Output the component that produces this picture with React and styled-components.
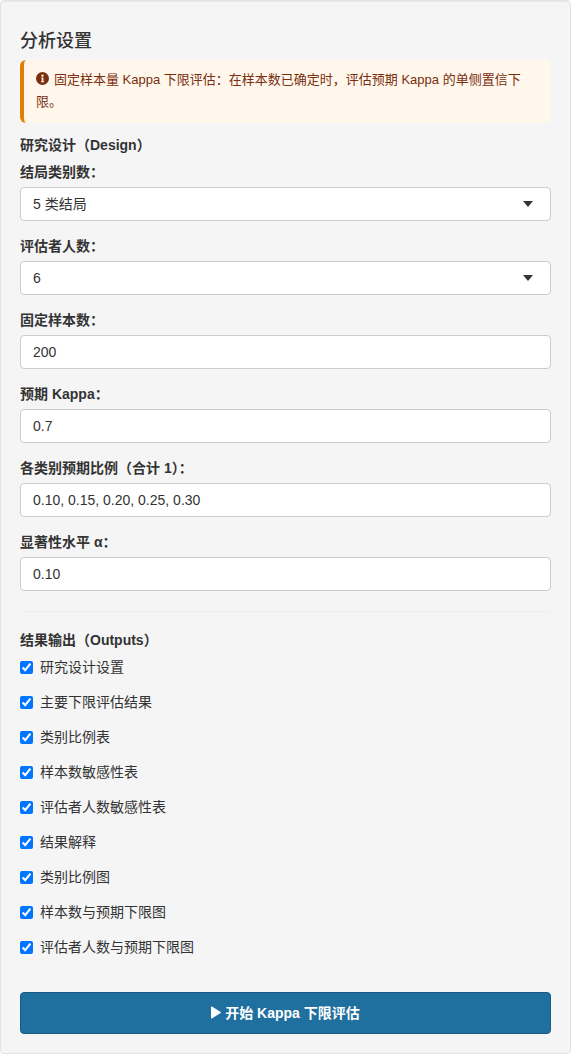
import React from 'react';
import styled, { createGlobalStyle } from 'styled-components';

const Global = createGlobalStyle`
  * {
    box-sizing: border-box;
  }

  body {
    margin: 0;
    background: #fff;
    color: #333;
    font-family: "Liberation Sans", "Noto Sans CJK SC", sans-serif;
    font-size: 14px;
    line-height: 20px;
  }
`;

const Panel = styled.form`
  width: 571px;
  height: 1054px;
  padding: 30px 19px 0;
  background: #f5f5f5;
  border: 1px solid #e3e3e3;
  border-radius: 4px;
  box-shadow: inset 0 1px 1px rgba(0, 0, 0, 0.05);
`;

const Title = styled.h4`
  margin: 0 0 9px;
  font-size: 18px;
  line-height: 20px;
  font-weight: 500;
`;

const Alert = styled.div`
  height: 63px;
  margin-bottom: 12px;
  padding: 9px 16px 0 12px;
  background: #fff7ec;
  border-left: 4px solid #e07f00;
  border-radius: 6px;
  color: #7a2e0e;
  font-size: 13px;
  line-height: 22px;

  svg {
    margin-right: 5px;
    vertical-align: -1px;
  }
`;

const SectionTitle = styled.div`
  margin-bottom: 7px;
  font-weight: 700;
  font-size: 14px;
  line-height: 20px;
`;

const Field = styled.div`
  margin-bottom: 15px;
`;

const Label = styled.label`
  display: block;
  margin-bottom: 5px;
  font-weight: 700;
  font-size: 14px;
  line-height: 20px;
`;

const SelectWrap = styled.div`
  position: relative;

  &::after {
    content: '';
    position: absolute;
    top: 14px;
    right: 18px;
    border-left: 5px solid transparent;
    border-right: 5px solid transparent;
    border-top: 6px solid #333;
  }
`;

const controlStyles = `
  display: block;
  width: 100%;
  height: 34px;
  padding: 6px 12px;
  background: #fff;
  border: 1px solid #ccc;
  border-radius: 4px;
  color: #333;
  font-family: inherit;
  font-size: 14px;
  line-height: 20px;
  outline: none;
`;

const Select = styled.select`
  ${controlStyles}
  appearance: none;
`;

const Input = styled.input`
  ${controlStyles}
`;

const Divider = styled.hr`
  margin: 20px 0 18px;
  border: 0;
  border-top: 1px solid #eee;
`;

const CheckList = styled.div`
  display: flex;
  flex-direction: column;
  gap: 15px;
`;

const CheckRow = styled.label`
  display: flex;
  align-items: center;
  gap: 7px;
  height: 20px;
  font-size: 14px;
`;

const Check = styled.input`
  width: 13px;
  height: 13px;
  margin: 0;
`;

const RunButton = styled.button`
  display: flex;
  align-items: center;
  justify-content: center;
  gap: 4px;
  width: 100%;
  height: 42px;
  margin-top: 35px;
  padding: 0 0 2px;
  background: #1f6f9f;
  border: 1px solid #185a84;
  border-radius: 4px;
  color: #fff;
  font-family: inherit;
  font-size: 14px;
  font-weight: 700;
`;

const InfoIcon = () => (
  <svg width="13" height="13" viewBox="0 0 13 13">
    <circle cx="6.5" cy="6.5" r="6.5" fill="#7a2e0e" />
    <circle cx="6.5" cy="3.6" r="1.2" fill="#fff7ec" />
    <path d="M5.2 5.6h2.2v3.7h.8v1H4.9v-1h.9V6.6h-.6z" fill="#fff7ec" />
  </svg>
);

const PlayIcon = () => (
  <svg width="10" height="13" viewBox="0 0 10 13">
    <path d="M1 .6c-.5-.3-1 0-1 .6v10.6c0 .6.5.9 1 .6l8.6-5.3c.5-.3.5-.9 0-1.2z" fill="#fff" />
  </svg>
);

const outputs = [
  '研究设计设置',
  '主要下限评估结果',
  '类别比例表',
  '样本数敏感性表',
  '评估者人数敏感性表',
  '结果解释',
  '类别比例图',
  '样本数与预期下限图',
  '评估者人数与预期下限图',
];

const textFields = [
  { label: '固定样本数：', value: '200' },
  { label: '预期 Kappa：', value: '0.7' },
  { label: '各类别预期比例（合计 1）：', value: '0.10, 0.15, 0.20, 0.25, 0.30' },
  { label: '显著性水平 α：', value: '0.10' },
];

const App = () => (
  <>
    <Global />
    <Panel>
      <Title>分析设置</Title>
      <Alert>
        <InfoIcon />
        固定样本量 Kappa 下限评估：在样本数已确定时，评估预期 Kappa 的单侧置信下限。
      </Alert>
      <SectionTitle>研究设计（Design）</SectionTitle>
      <Field>
        <Label>结局类别数：</Label>
        <SelectWrap>
          <Select defaultValue="5">
            <option value="5">5 类结局</option>
          </Select>
        </SelectWrap>
      </Field>
      <Field>
        <Label>评估者人数：</Label>
        <SelectWrap>
          <Select defaultValue="6">
            <option value="6">6</option>
          </Select>
        </SelectWrap>
      </Field>
      {textFields.map((f) => (
        <Field key={f.label}>
          <Label>{f.label}</Label>
          <Input type="text" defaultValue={f.value} />
        </Field>
      ))}
      <Divider />
      <SectionTitle>结果输出（Outputs）</SectionTitle>
      <CheckList>
        {outputs.map((o) => (
          <CheckRow key={o}>
            <Check type="checkbox" defaultChecked />
            {o}
          </CheckRow>
        ))}
      </CheckList>
      <RunButton type="button">
        <PlayIcon />
        开始 Kappa 下限评估
      </RunButton>
    </Panel>
  </>
);

export default App;
